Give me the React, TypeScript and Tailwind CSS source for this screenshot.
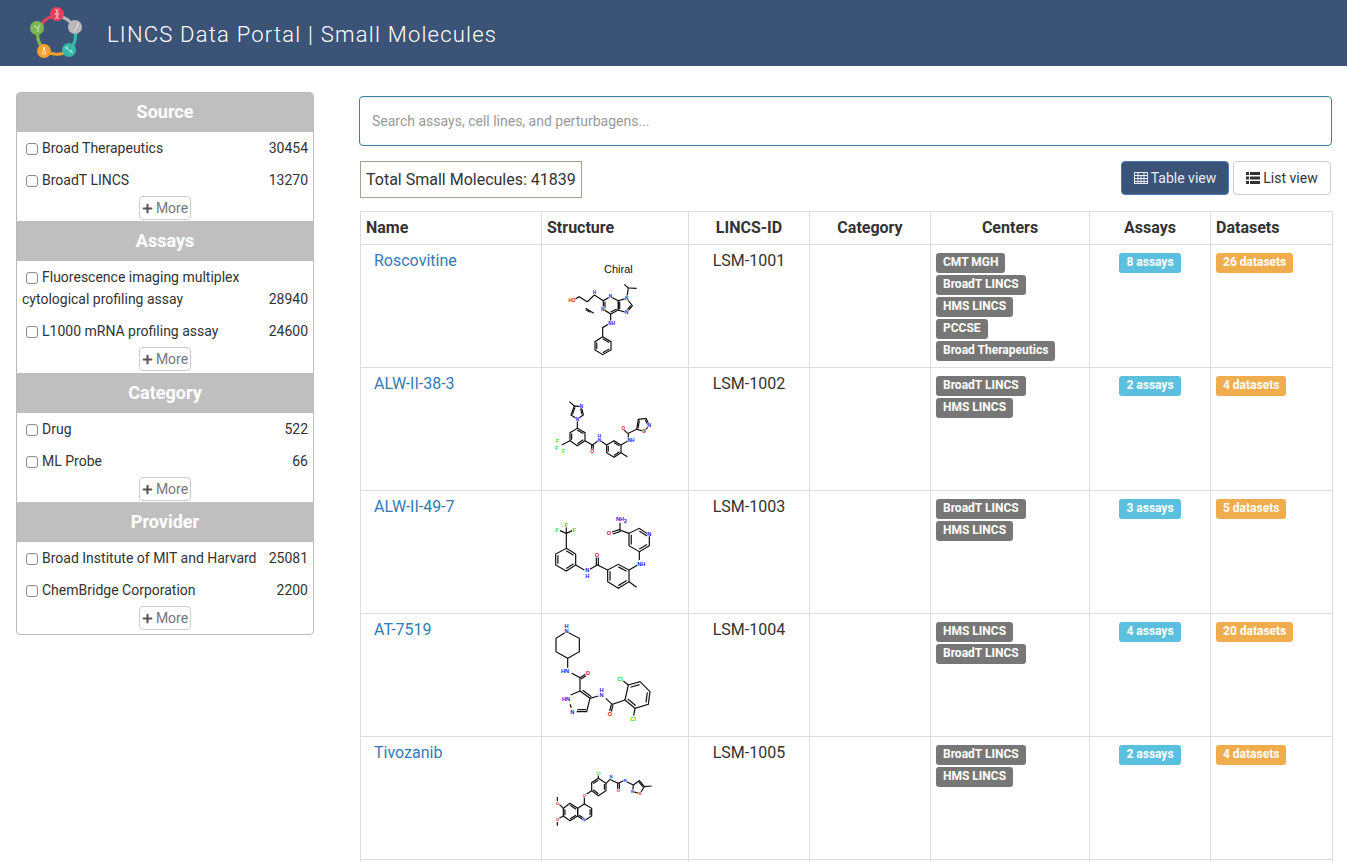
import { FaPlus } from "react-icons/fa"

type Pt = [number, number]
type Ring = { pts: Pt[]; doubles: number[] }
type Mol = {
  viewBox: string
  rings: Ring[]
  bonds: Pt[][]
  labels: [number, number, string, string][]
  size: number
}

const BLUE = "#2020e8"
const RED = "#e80f1c"
const GREEN = "#1ed81e"

// draws the inner stroke of a double bond, pulled toward the middle of the ring
function innerLine(r: Ring, i: number) {
  const cx = r.pts.reduce((s, p) => s + p[0], 0) / r.pts.length
  const cy = r.pts.reduce((s, p) => s + p[1], 0) / r.pts.length
  const a = r.pts[i]
  const b = r.pts[(i + 1) % r.pts.length]
  const pull = (p: Pt, k: number): Pt => [p[0] + (cx - p[0]) * k, p[1] + (cy - p[1]) * k]
  return [pull(a, 0.22), pull(b, 0.22)]
}

function Molecule({ mol }: { mol: Mol }) {
  return (
    <svg viewBox={mol.viewBox} className="block w-[146px] h-[122px]">
      <g fill="none" stroke="#111" strokeWidth={3.6}>
        {mol.rings.map((r, i) => (
          <g key={i}>
            <polygon points={r.pts.map((p) => p.join(",")).join(" ")} />
            {r.doubles.map((d) => {
              const [a, b] = innerLine(r, d)
              return <line key={d} x1={a[0]} y1={a[1]} x2={b[0]} y2={b[1]} />
            })}
          </g>
        ))}
        {mol.bonds.map((b, i) => (
          <polyline key={i} points={b.map((p) => p.join(",")).join(" ")} />
        ))}
      </g>
      {mol.labels.map(([x, y, t, c], i) => (
        <text
          key={i}
          x={x}
          y={y}
          fill={c}
          fontSize={mol.size}
          fontWeight={700}
          textAnchor="middle"
          dominantBaseline="central"
          fontFamily="'Liberation Sans', sans-serif"
          stroke="#fff"
          strokeWidth={2.5}
          paintOrder="stroke"
        >
          {t}
        </text>
      ))}
    </svg>
  )
}

const roscovitine: Mol = {
  viewBox: "561 285 438 366",
  size: 14,
  rings: [
    { pts: [[790, 452], [766, 440], [745, 452], [745, 478], [767, 492], [790, 480]], doubles: [2, 4] },
    { pts: [[815, 445], [790, 452], [790, 480], [815, 488], [832, 467]], doubles: [1, 3] },
    { pts: [[743, 560], [768, 575], [768, 600], [743, 614], [720, 600], [720, 575]], doubles: [0, 2, 4] },
  ],
  bonds: [
    [[815, 445], [820, 414], [808, 403]],
    [[820, 414], [845, 415]],
    [[745, 452], [718, 435], [697, 455], [672, 440], [660, 448]],
    [[692, 475], [716, 490]],
    [[692, 479], [706, 487]],
    [[767, 492], [767, 518], [743, 533], [743, 560]],
  ],
  labels: [
    [718, 428, "H", BLUE],
    [766, 440, "N", BLUE],
    [743, 478, "N", BLUE],
    [815, 445, "N", BLUE],
    [815, 488, "N", BLUE],
    [770, 520, "NH", BLUE],
    [651, 451, "HO", RED],
  ],
}

const alw38: Mol = {
  viewBox: "6 -6 438 366",
  size: 14,
  rings: [
    { pts: [[103, 108], [93, 135], [112, 147], [130, 135], [124, 110]], doubles: [0, 3] },
    { pts: [[112, 175], [135, 188], [135, 212], [112, 227], [90, 212], [90, 188]], doubles: [0, 2, 4] },
    { pts: [[200, 225], [222, 212], [243, 225], [243, 248], [222, 262], [200, 248]], doubles: [1, 3, 5] },
    { pts: [[290, 178], [295, 148], [318, 145], [328, 165], [313, 184]], doubles: [0, 2] },
  ],
  bonds: [
    [[88, 95], [103, 108]],
    [[112, 147], [112, 175]],
    [[90, 212], [65, 225]],
    [[135, 212], [157, 225], [178, 210], [200, 225]],
    [[155, 225], [155, 243]],
    [[160, 225], [160, 243]],
    [[243, 248], [262, 260]],
    [[243, 225], [265, 212], [265, 190], [290, 178]],
    [[263, 190], [250, 178]],
  ],
  labels: [
    [124, 110, "N", BLUE],
    [112, 147, "N", BLUE],
    [52, 215, "F", GREEN],
    [50, 236, "F", GREEN],
    [70, 244, "F", GREEN],
    [157, 245, "O", RED],
    [178, 199, "H", BLUE],
    [178, 212, "N", BLUE],
    [273, 212, "NH", BLUE],
    [250, 176, "O", RED],
    [328, 166, "N", BLUE],
    [313, 184, "O", RED],
  ],
}

const alw49: Mol = {
  viewBox: "6 363 438 366",
  size: 17,
  rings: [
    { pts: [[79, 535], [107, 552], [107, 585], [79, 603], [47, 585], [47, 552]], doubles: [0, 2, 4] },
    { pts: [[203, 600], [235, 583], [267, 600], [267, 635], [235, 655], [203, 635]], doubles: [1, 3, 5] },
    { pts: [[298, 545], [328, 527], [328, 495], [298, 475], [267, 490], [267, 527]], doubles: [0, 2, 4] },
  ],
  bonds: [
    [[79, 535], [79, 490]],
    [[79, 490], [79, 472]],
    [[79, 490], [60, 482]],
    [[79, 490], [97, 482]],
    [[107, 585], [133, 600]],
    [[150, 598], [172, 585], [203, 600]],
    [[169, 585], [169, 562]],
    [[175, 585], [175, 562]],
    [[267, 635], [290, 652]],
    [[267, 600], [293, 585]],
    [[298, 570], [298, 545]],
    [[267, 490], [240, 480], [240, 458]],
    [[240, 478], [216, 486]],
    [[242, 484], [218, 492]],
  ],
  labels: [
    [79, 465, "F", GREEN],
    [52, 480, "F", GREEN],
    [103, 480, "F", GREEN],
    [142, 601, "N", BLUE],
    [142, 618, "H", BLUE],
    [171, 555, "O", RED],
    [304, 582, "NH", BLUE],
    [328, 491, "N", BLUE],
    [207, 489, "O", RED],
    [240, 447, "NH", BLUE],
    [256, 453, "2", BLUE],
  ],
}

const at7519: Mol = {
  viewBox: "6 -3 438 366",
  size: 17,
  rings: [
    { pts: [[80, 50], [118, 70], [118, 110], [83, 130], [48, 110], [48, 70]], doubles: [] },
    { pts: [[255, 255], [265, 210], [300, 200], [330, 230], [325, 268], [285, 280]], doubles: [1, 3, 5] },
  ],
  bonds: [
    [[83, 130], [83, 158]],
    [[95, 175], [120, 188], [120, 228]],
    [[120, 188], [136, 178]],
    [[123, 192], [138, 182]],
    [[120, 228], [150, 250], [140, 290], [110, 290]],
    [[92, 240], [120, 228]],
    [[90, 268], [94, 278]],
    [[112, 284], [138, 284]],
    [[128, 226], [154, 245]],
    [[150, 250], [175, 243]],
    [[197, 250], [217, 268], [255, 255]],
    [[214, 268], [209, 288]],
    [[219, 270], [214, 290]],
    [[265, 210], [250, 198]],
    [[285, 280], [281, 302]],
  ],
  labels: [
    [80, 32, "H", BLUE],
    [80, 47, "N", BLUE],
    [75, 167, "HN", BLUE],
    [143, 174, "O", RED],
    [78, 252, "HN", BLUE],
    [97, 291, "N", BLUE],
    [185, 225, "H", BLUE],
    [185, 240, "N", BLUE],
    [210, 297, "O", RED],
    [240, 192, "Cl", GREEN],
    [279, 312, "Cl", GREEN],
  ],
}

const tivozanib: Mol = {
  viewBox: "6 366 438 366",
  size: 13,
  rings: [
    { pts: [[175, 490], [198, 505], [198, 527], [175, 542], [155, 527], [155, 503]], doubles: [1, 3, 5] },
    { pts: [[280, 510], [298, 497], [313, 515], [300, 536], [278, 530]], doubles: [1] },
    { pts: [[133, 567], [155, 580], [155, 603], [133, 617], [113, 603], [113, 580]], doubles: [1, 3] },
    { pts: [[113, 580], [90, 565], [70, 580], [70, 603], [90, 617], [113, 603]], doubles: [0, 2, 4] },
  ],
  bonds: [
    [[175, 490], [175, 480]],
    [[198, 505], [213, 490]],
    [[213, 495], [235, 505], [255, 495]],
    [[233, 505], [233, 522]],
    [[238, 505], [238, 522]],
    [[260, 500], [280, 510]],
    [[313, 515], [335, 513]],
    [[155, 527], [140, 537]],
    [[133, 545], [133, 567]],
    [[70, 580], [58, 568]],
    [[70, 603], [58, 610]],
    [[52, 558], [52, 546]],
    [[52, 620], [52, 632]],
  ],
  labels: [
    [175, 475, "Cl", GREEN],
    [213, 484, "N", BLUE],
    [235, 526, "O", RED],
    [255, 496, "N", BLUE],
    [278, 530, "N", BLUE],
    [300, 536, "O", RED],
    [133, 541, "O", RED],
    [52, 565, "O", RED],
    [52, 612, "O", RED],
    [132, 614, "N", BLUE],
  ],
}

const rows = [
  { name: "Roscovitine", id: "LSM-1001", mol: roscovitine, chiral: true, centers: ["CMT MGH", "BroadT LINCS", "HMS LINCS", "PCCSE", "Broad Therapeutics"], assays: "8 assays", datasets: "26 datasets" },
  { name: "ALW-II-38-3", id: "LSM-1002", mol: alw38, centers: ["BroadT LINCS", "HMS LINCS"], assays: "2 assays", datasets: "4 datasets" },
  { name: "ALW-II-49-7", id: "LSM-1003", mol: alw49, centers: ["BroadT LINCS", "HMS LINCS"], assays: "3 assays", datasets: "5 datasets" },
  { name: "AT-7519", id: "LSM-1004", mol: at7519, centers: ["HMS LINCS", "BroadT LINCS"], assays: "4 assays", datasets: "20 datasets" },
  { name: "Tivozanib", id: "LSM-1005", mol: tivozanib, centers: ["BroadT LINCS", "HMS LINCS"], assays: "2 assays", datasets: "4 datasets" },
]

const facets = [
  { title: "Source", head: "h-[39px]", foot: "pb-px", items: [["Broad Therapeutics", "30454"], ["BroadT LINCS", "13270"]] },
  { title: "Assays", head: "h-[40px]", foot: "pb-[2px]", items: [["Fluorescence imaging multiplex cytological profiling assay", "28940"], ["L1000 mRNA profiling assay", "24600"]] },
  { title: "Category", head: "h-[40px]", foot: "pb-px", items: [["Drug", "522"], ["ML Probe", "66"]] },
  { title: "Provider", head: "h-[40px]", foot: "pb-[4px]", items: [["Broad Institute of MIT and Harvard", "25081"], ["ChemBridge Corporation", "2200"]] },
]

function Logo() {
  return (
    <svg viewBox="30 6 54 54" className="w-[54px] h-[54px] shrink-0">
      <g fill="none" strokeWidth={3.2}>
        <path d="M41 25 A19 19 0 0 1 57 16" stroke="#e8405a" />
        <path d="M57 16 A19 19 0 0 1 74 28" stroke="#b9b9b9" />
        <path d="M74 28 A19 19 0 0 1 69 50" stroke="#35b8a8" />
        <path d="M69 50 A19 19 0 0 1 45 50" stroke="#f3a12c" />
        <path d="M45 50 A19 19 0 0 1 39 28" stroke="#7cb554" />
      </g>
      <circle cx="57" cy="14" r="7" fill="#e8405a" />
      <circle cx="75" cy="27" r="7" fill="#b9b9b9" />
      <circle cx="69" cy="50" r="7" fill="#35b8a8" />
      <circle cx="44" cy="51" r="7" fill="#f3a12c" />
      <circle cx="37" cy="28" r="7" fill="#7cb554" />
      <g fill="none" stroke="#fff" strokeWidth={1} opacity={0.7}>
        <path d="M55 9 Q60 12 55 14 Q60 16 55 19 M59 9 Q54 12 59 14 Q54 16 59 19" />
        <path d="M78 23 Q78 28 74 31" />
        <path d="M65 47 L73 53 M68 46 L66 49 M72 50 L70 53" />
        <path d="M43.5 47 L43.5 50 L42 54 L46 54 L44.5 50 L44.5 47" />
        <path d="M34 26 L38 28 L40 25 M38 28 L38 32" />
      </g>
    </svg>
  )
}

function TableIcon() {
  return (
    <svg viewBox="0 0 14 12" className="w-[14px] h-[12px]" fill="none" stroke="currentColor" strokeWidth={1}>
      <rect x="0.5" y="0.5" width="13" height="11" />
      <path d="M0 3.5H14M0 6.5H14M0 9.5H14M4 0V12M7 3V12M10 0V12" />
    </svg>
  )
}

function ListIcon() {
  return (
    <svg viewBox="0 0 14 12" className="w-[14px] h-[12px]" fill="currentColor">
      <rect x="0" y="0" width="3" height="3" />
      <rect x="4" y="0" width="10" height="3" />
      <rect x="0" y="4.5" width="3" height="3" />
      <rect x="4" y="4.5" width="10" height="3" />
      <rect x="0" y="9" width="3" height="3" />
      <rect x="4" y="9" width="10" height="3" />
    </svg>
  )
}

function Facet({ title, head, foot, items }: { title: string; head: string; foot: string; items: string[][] }) {
  return (
    <div>
      <div className={`flex items-center justify-center pb-[2px] bg-[#bfbfbf] text-white font-bold text-[18px] ${head}`}>{title}</div>
      <div className={`px-[5px] pt-[5px] ${foot}`}>
        <div className="flex flex-col gap-[10px] pb-[5px]">
          {items.map(([label, count]) => (
            <div key={label} className="flex items-end justify-between gap-3 text-[14px] leading-[22px] text-[#333]">
              <label className="block">
                <input type="checkbox" readOnly className="appearance-none inline-block w-[12px] h-[12px] mx-[4px] align-[-2px] border border-[#8c8c8c] rounded-[3px] bg-white" />
                {label}
              </label>
              <span>{count}</span>
            </div>
          ))}
        </div>
        <div className="flex justify-center">
          <button className="h-[24px] w-[52px] flex items-center justify-center gap-[3px] border border-[#ccc] rounded-[4px] bg-white text-[14px] text-[#777]">
            <FaPlus className="w-[11px] h-[11px] text-[#555]" />
            More
          </button>
        </div>
      </div>
    </div>
  )
}

function Label({ color, children }: { color: string; children: string }) {
  return (
    <span className={`inline-block h-[20px] px-[7px] rounded-[3px] text-white text-[12px] leading-[18px] font-bold whitespace-nowrap ${color}`}>
      {children}
    </span>
  )
}

export default function App() {
  return (
    <div className="h-[862px] overflow-hidden bg-white font-['Roboto',sans-serif] text-[#333]">
      <header className="h-[66px] bg-[#3c5378] flex items-center pl-[30px] gap-[23px]">
        <Logo />
        <h1 className="pt-[3px] text-[22px] font-light text-white tracking-[1.22px]">LINCS Data Portal | Small Molecules</h1>
      </header>

      <div className="flex items-start">
        <aside className="ml-[16px] mt-[26px] w-[298px] shrink-0 border border-[#bbb] rounded-[4px] overflow-hidden bg-white">
          {facets.map((f) => (
            <Facet key={f.title} title={f.title} head={f.head} foot={f.foot} items={f.items} />
          ))}
        </aside>

        <main className="ml-[45px] mt-[30px] w-[973px] shrink-0">
          <input
            placeholder="Search assays, cell lines, and perturbagens..."
            className="block w-full h-[50px] px-[12px] text-[14px] border border-[#3b82a0] rounded-[4px] outline-none placeholder:text-[#999] shadow-[inset_0_1px_1px_rgba(0,0,0,0.075)]"
          />

          <div className="mt-[15px] ml-px flex items-start justify-between">
            <div className="h-[37px] px-[5px] flex items-center border border-[#a3a394] text-[16px] text-[#333]">Total Small Molecules: 41839</div>
            <div className="flex gap-[4px] mr-px">
              <button className="h-[34px] w-[108px] flex items-center justify-center gap-[3px] rounded-[4px] bg-[#3c5378] border border-[#4a7ab0] text-[14px] text-[#e8ecf2]">
                <TableIcon />
                Table view
              </button>
              <button className="h-[34px] w-[98px] flex items-center justify-center gap-[3px] rounded-[4px] bg-white border border-[#ccc] text-[14px] text-[#333]">
                <ListIcon />
                List view
              </button>
            </div>
          </div>

          <table className="mt-[13px] ml-px w-[973px] table-fixed border-collapse text-[16px]">
            <colgroup>
              <col className="w-[181px]" />
              <col className="w-[147px]" />
              <col className="w-[121px]" />
              <col className="w-[121px]" />
              <col className="w-[159px]" />
              <col className="w-[121px]" />
              <col className="w-[122px]" />
            </colgroup>
            <thead>
              <tr className="h-[33px]">
                <th className="border border-[#ddd] px-[5px] text-left font-bold">Name</th>
                <th className="border border-[#ddd] px-[5px] text-left font-bold">Structure</th>
                <th className="border border-[#ddd] px-[5px] text-center font-bold">LINCS-ID</th>
                <th className="border border-[#ddd] px-[5px] text-center font-bold">Category</th>
                <th className="border border-[#ddd] px-[5px] text-center font-bold">Centers</th>
                <th className="border border-[#ddd] px-[5px] text-center font-bold">Assays</th>
                <th className="border border-[#ddd] px-[5px] text-left font-bold">Datasets</th>
              </tr>
            </thead>
            <tbody>
              {rows.map((r) => (
                <tr key={r.id} className="h-[123px]">
                  <td className="border border-[#ddd] align-top pl-[13px] pt-[4px] leading-[23px] text-[#337ab7]">{r.name}</td>
                  <td className="border border-[#ddd] align-top p-0">
                    <div className="relative">
                      <Molecule mol={r.mol} />
                      {r.chiral && (
                        <span className="absolute left-[62px] top-[17px] text-[11px] leading-[14px] font-['Liberation_Sans',sans-serif] text-[#111]">Chiral</span>
                      )}
                    </div>
                  </td>
                  <td className="border border-[#ddd] align-top text-center pt-[4px] leading-[23px]">{r.id}</td>
                  <td className="border border-[#ddd]" />
                  <td className="border border-[#ddd] align-top pl-[5px] pt-[8px]">
                    <div className="flex flex-col items-start gap-[2px]">
                      {r.centers.map((c) => (
                        <Label key={c} color="bg-[#777]">{c}</Label>
                      ))}
                    </div>
                  </td>
                  <td className="border border-[#ddd] align-top text-center pt-[8px] leading-none">
                    <Label color="bg-[#5bc0de]">{r.assays}</Label>
                  </td>
                  <td className="border border-[#ddd] align-top pl-[5px] pt-[8px] leading-none">
                    <Label color="bg-[#f0ad4e]">{r.datasets}</Label>
                  </td>
                </tr>
              ))}
              <tr className="h-[123px]">
                <td className="border border-[#ddd]" />
                <td className="border border-[#ddd]" />
                <td className="border border-[#ddd]" />
                <td className="border border-[#ddd]" />
                <td className="border border-[#ddd]" />
                <td className="border border-[#ddd]" />
                <td className="border border-[#ddd]" />
              </tr>
            </tbody>
          </table>
        </main>
      </div>
    </div>
  )
}
